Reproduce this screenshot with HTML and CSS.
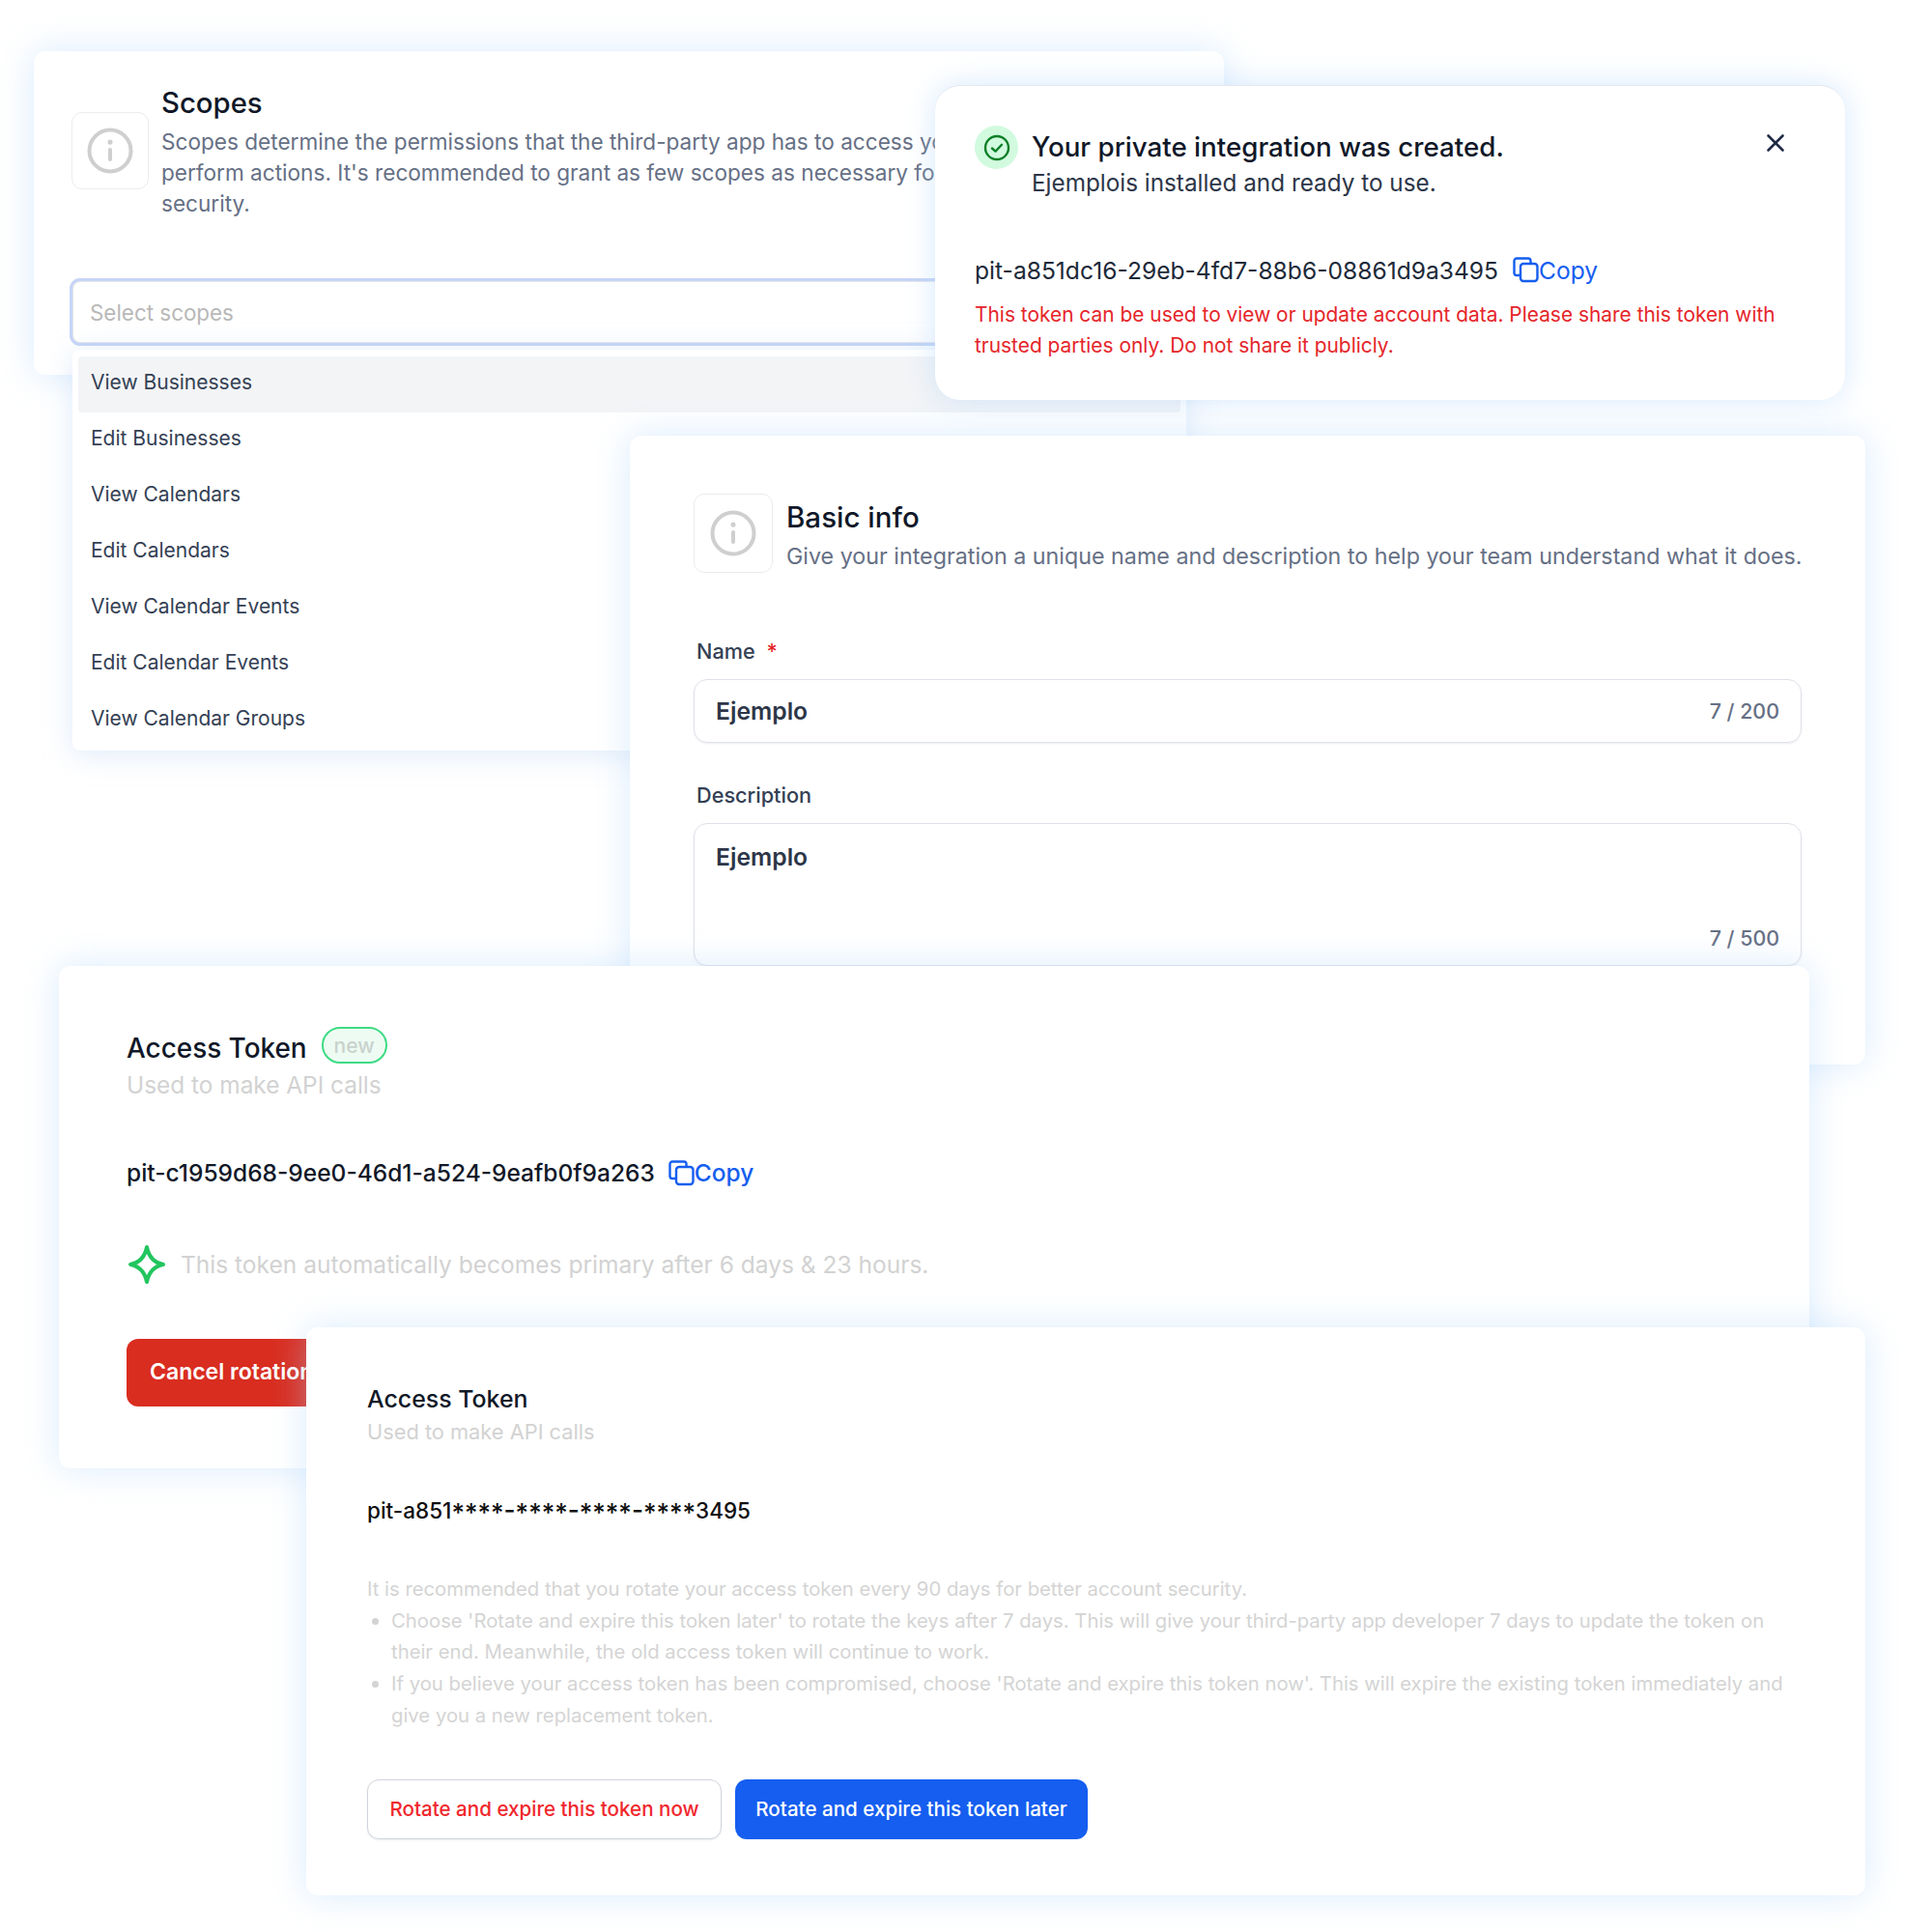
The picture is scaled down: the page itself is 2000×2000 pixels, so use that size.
FILE: index.html
```html
<!DOCTYPE html>
<html lang="en">
<head>
    <meta name="viewport" content="width=device-width, initial-scale=1">
    <title>Private integrations</title>
    <link rel="stylesheet" href="styles.css">
</head>
<body>

<div class="canvas">

    <!-- scopes -->
    <section class="card card-scopes">
        <div class="head">
            <div class="icon-box icon-box-scopes">
                <svg width="50" height="50" viewBox="0 0 50 50" fill="none" stroke="#cfcfcf" stroke-linecap="round">
                    <circle cx="25" cy="25" r="21.5" stroke-width="4"/>
                    <path d="M25 24v10" stroke-width="4"/>
                    <path d="M25 16v.2" stroke-width="5"/>
                </svg>
            </div>
            <div class="head-text">
                <h2 class="title-scopes">Scopes</h2>
                <p class="desc desc-scopes">Scopes determine the permissions that the third-party app has to access your<br>perform actions. It's recommended to grant as few scopes as necessary for<br>security.</p>
            </div>
        </div>
        <div class="select-box">Select scopes</div>
    </section>

    <ul class="dropdown">
        <li class="active">View Businesses</li>
        <li>Edit Businesses</li>
        <li>View Calendars</li>
        <li>Edit Calendars</li>
        <li>View Calendar Events</li>
        <li>Edit Calendar Events</li>
        <li>View Calendar Groups</li>
    </ul>

    <!-- basic info -->
    <section class="card card-basic">
        <div class="head head-basic">
            <div class="icon-box icon-box-basic">
                <svg width="50" height="50" viewBox="0 0 50 50" fill="none" stroke="#cfcfcf" stroke-linecap="round">
                    <circle cx="25" cy="25" r="21.5" stroke-width="4"/>
                    <path d="M25 24v10" stroke-width="4"/>
                    <path d="M25 16v.2" stroke-width="5"/>
                </svg>
            </div>
            <div class="head-text head-text-basic">
                <h2 class="title-basic">Basic info</h2>
                <p class="desc desc-basic">Give your integration a unique name and description to help your team understand what it does.</p>
            </div>
        </div>

        <label class="field-label">Name <span class="required">*</span></label>
        <div class="field field-name">
            <span class="field-value">Ejemplo</span>
            <span class="field-count">7 / 200</span>
        </div>

        <label class="field-label field-label-desc">Description</label>
        <div class="field field-desc">
            <span class="field-value">Ejemplo</span>
            <span class="field-count">7 / 500</span>
        </div>
    </section>

    <!-- created dialog -->
    <section class="card card-success">
        <div class="success-head">
            <div class="check-circle">
                <svg width="28" height="28" viewBox="0 0 28 28" fill="none" stroke="#0b7f26" stroke-linecap="round" stroke-linejoin="round">
                    <circle cx="14" cy="14" r="12" stroke-width="2.4"/>
                    <path d="M9 14.5l3.5 3.2L19 10.8" stroke-width="2.4"/>
                </svg>
            </div>
            <div class="success-text">
                <h3>Your private integration was created.</h3>
                <p>Ejemplois installed and ready to use.</p>
            </div>
            <svg class="close-icon" width="20" height="20" viewBox="0 0 20 20" fill="none" stroke="#1f2a44" stroke-width="2.6" stroke-linecap="round">
                <path d="M2.5 2.5l15 15M17.5 2.5l-15 15"/>
            </svg>
        </div>
        <div class="token token-success">
            <span>pit-a851dc16-29eb-4fd7-88b6-08861d9a3495</span>
            <a class="copy">
                <svg width="27" height="27" viewBox="0 0 27 27" fill="none" stroke="#155eef" stroke-width="2.4" stroke-linejoin="round">
                    <path d="M8 19H4a2.500 2.500 0 0 1-2.500-2.500V4A2.500 2.500 0 0 1 4 1.500h12A2.500 2.500 0 0 1 18.500 4v3"/>
                    <rect x="8" y="7" width="17.500" height="18" rx="3"/>
                </svg>Copy</a>
        </div>
        <p class="warning">This token can be used to view or update account data. Please share this token with trusted parties only. Do not share it publicly.</p>
    </section>

    <!-- rotating token -->
    <section class="card card-rotation">
        <div class="rotation-title">
            <h2>Access Token</h2>
            <span class="badge">new</span>
        </div>
        <p class="muted muted-large muted-sub">Used to make API calls</p>
        <div class="token token-rotation">
            <span>pit-c1959d68-9ee0-46d1-a524-9eafb0f9a263</span>
            <a class="copy">
                <svg width="27" height="27" viewBox="0 0 27 27" fill="none" stroke="#155eef" stroke-width="2.4" stroke-linejoin="round">
                    <path d="M8 19H4a2.500 2.500 0 0 1-2.500-2.500V4A2.500 2.500 0 0 1 4 1.500h12A2.500 2.500 0 0 1 18.500 4v3"/>
                    <rect x="8" y="7" width="17.500" height="18" rx="3"/>
                </svg>Copy</a>
        </div>
        <div class="notice">
            <svg width="42" height="42" viewBox="0 0 42 42" fill="none" stroke="#22c55e" stroke-width="4" stroke-linejoin="round">
                <path d="M21 3c2 10 7 16 17 18-10 2-15 8-17 18-2-10-7-16-17-18 10-2 15-8 17-18z"/>
            </svg>
            <span class="muted notice-text">This token automatically becomes primary after 6 days &amp; 23 hours.</span>
        </div>
        <button class="btn btn-cancel">Cancel rotation</button>
    </section>

    <!-- masked token -->
    <section class="card card-token">
        <h2 class="title-token">Access Token</h2>
        <p class="muted muted-small">Used to make API calls</p>
        <div class="token-masked">pit-a851<span class="mask"><span class="stars">****</span>-<span class="stars">****</span>-<span class="stars">****</span>-<span class="stars">****</span></span>3495</div>
        <div class="advice">
            <p>It is recommended that you rotate your access token every 90 days for better account security.</p>
            <ul>
                <li>Choose 'Rotate and expire this token later' to rotate the keys after 7 days. This will give your third-party app developer 7 days to update the token on their end. Meanwhile, the old access token will continue to work.</li>
                <li>If you believe your access token has been compromised, choose 'Rotate and expire this token now'. This will expire the existing token immediately and give you a new replacement token.</li>
            </ul>
        </div>
        <div class="actions">
            <button class="btn btn-now">Rotate and expire this token now</button>
            <button class="btn btn-later">Rotate and expire this token later</button>
        </div>
    </section>

</div>

</body>
</html>
```

FILE: styles.css
```css
* {
    box-sizing: border-box;
}

body {
    margin: 0;
    background-color: #fff;
    font-family: Inter, "Noto Sans", sans-serif;
    color: #101828;
}

h2, h3, p, ul {
    margin: 0;
    padding: 0;
}

.canvas {
    position: relative;
    width: 2000px;
    height: 2000px;
    overflow: hidden;
}

.card {
    position: absolute;
    background-color: #fff;
    border-radius: 12px;
    box-shadow: 0 0 36px rgba(170, 210, 250, .45);
}

.card-scopes {
    left: 35px;
    top: 53px;
    width: 1232px;
    height: 335px;
    padding: 36px 37px 0 39px;
}

.head {
    display: flex;
    gap: 13px;
}

.icon-box {
    flex: none;
    display: flex;
    align-items: center;
    justify-content: center;
    border: 1.500px solid #eaecf0;
    border-radius: 11px;
}

.icon-box-scopes {
    width: 80px;
    height: 80px;
    margin-top: 27px;
}

.icon-box-basic {
    width: 82px;
    height: 82px;
}

.title-scopes, .title-basic {
    font-size: 29.500px;
    font-weight: 500;
    line-height: 36px;
    color: #101828;
}

.title-scopes {
    font-size: 29.300px;
}

.desc {
    color: #667085;
    font-size: 22.600px;
    line-height: 32px;
    white-space: nowrap;
}

.desc-scopes {
    margin-top: 6px;
}

.head-text-basic {
    padding-top: 5px;
}

.desc-basic {
    margin-top: 7.500px;
    font-size: 23.270px;
}

.select-box {
    margin-top: 61px;
    height: 70px;
    margin-left: -2px;
    padding: 0 21px;
    display: flex;
    align-items: center;
    border-radius: 11px;
    box-shadow: inset 0 0 0 3px #c6d5f8, inset 0 0 0 4px #e6e6e8;
    color: #b8b8b8;
    font-size: 22.400px;
}

.dropdown {
    position: absolute;
    left: 75px;
    top: 362px;
    width: 1153px;
    height: 415px;
    padding: 7px 6px;
    list-style-type: none;
    overflow: hidden;
    background-color: #fff;
    border-radius: 8px;
    box-shadow: 0 4px 30px rgba(170, 200, 240, .36);
}

.dropdown li {
    height: 58px;
    padding: 0 0 6px 13px;
    display: flex;
    align-items: center;
    font-size: 21px;
    color: #344054;
    border-radius: 4px;
}

.dropdown li.active {
    background-color: #f3f4f6;
}

.card-basic {
    left: 652px;
    top: 451px;
    width: 1279px;
    height: 651px;
    padding: 60px 66px 0;
}

.head-basic {
    align-items: center;
    gap: 14px;
}

.field-label {
    display: block;
    margin: 63.500px 0 0 3px;
    font-size: 21.700px;
    line-height: 34px;
    font-weight: 500;
    color: #344054;
}

.required {
    margin-left: 6px;
    color: #e5252a;
}

.field-label-desc {
    margin-top: 36.500px;
}

.field {
    margin-top: 12.500px;
    display: flex;
    justify-content: space-between;
    align-items: center;
    padding: 0 22px;
    border: 1.500px solid #dfe1e8;
    border-radius: 14px;
    box-shadow: 0 1px 2px rgba(16, 24, 40, .08);
}

.field-name {
    height: 66px;
}

.field-desc {
    position: relative;
    height: 148px;
    align-items: flex-start;
    padding-top: 17px;
}

.field-desc .field-count {
    position: absolute;
    right: 22px;
    bottom: 13px;
}

.field-value {
    font-size: 24.700px;
    line-height: 34px;
    font-weight: 600;
    color: #2d3648;
}

.field-count {
    font-size: 21.400px;
    line-height: 30px;
    font-weight: 500;
    color: #667085;
}

.card-success {
    left: 968px;
    top: 88px;
    width: 942px;
    height: 326px;
    padding: 41px 41px 0;
    border-radius: 26px;
    border-top: 1px solid #e4e7ec;
    box-shadow: 0 0 30px rgba(170, 210, 250, .48);
}

.success-head {
    display: flex;
    position: relative;
}

.check-circle {
    flex: none;
    width: 45px;
    height: 45px;
    margin-right: 14px;
    display: flex;
    align-items: center;
    justify-content: center;
    border-radius: 50%;
    background-color: #d1fadf;
}

.success-text h3 {
    font-size: 27.750px;
    line-height: 44px;
    font-weight: 500;
    color: #101828;
}

.success-text p {
    margin-top: -1.500px;
    font-size: 24.300px;
    line-height: 32px;
    color: #2d3648;
}

.close-icon {
    position: absolute;
    right: 21px;
    top: 8px;
}

.token {
    display: flex;
    align-items: center;
    gap: 15px;
}

.token-success {
    margin-top: 58px;
    font-size: 24.600px;
    line-height: 34px;
    color: #1d2939;
}

.copy {
    display: flex;
    align-items: center;
    color: #155eef;
}

.warning {
    margin-top: 13px;
    font-size: 20.900px;
    line-height: 32px;
    color: #e5252a;
}

.card-rotation {
    left: 61px;
    top: 1000px;
    width: 1812px;
    height: 520px;
    padding: 62px 70px 0;
}

.rotation-title {
    display: flex;
    align-items: flex-start;
    gap: 15px;
}

.rotation-title h2 {
    margin-top: 4px;
    font-size: 27.900px;
    line-height: 39px;
    font-weight: 500;
    color: #101828;
}

.badge {
    height: 38px;
    width: 68px;
    margin-top: 1px;
    display: flex;
    align-items: center;
    justify-content: center;
    border: 2px solid #3ddc84;
    border-radius: 19px;
    background-color: #eefbf3;
    color: #c9d2cc;
    font-size: 21px;
    font-weight: 500;
}

.muted {
    color: #d2d2d2;
}

.muted-large {
    font-size: 24.400px;
    line-height: 34px;
}

.notice-text {
    font-size: 24.520px;
    line-height: 34px;
}

.muted-sub {
    margin-top: 1px;
}

.token-rotation {
    margin-top: 56px;
    gap: 14px;
    font-size: 24.500px;
    font-weight: 500;
    line-height: 36px;
    color: #101828;
}

.notice {
    margin-top: 56px;
    display: flex;
    align-items: center;
    gap: 14px;
}

.btn {
    font-family: inherit;
    border-radius: 12px;
    cursor: pointer;
}

.btn-cancel {
    margin-top: 56px;
    width: 280px;
    height: 70px;
    padding: 0 0 3px 24px;
    text-align: left;
    border: none;
    background-color: #d92d20;
    color: #fff;
    font-size: 23px;
    font-weight: 600;
}

.card-token {
    left: 317px;
    top: 1374px;
    width: 1614px;
    height: 588px;
    padding: 57px 63px 0;
}

.title-token {
    font-size: 24.900px;
    line-height: 35px;
    font-weight: 500;
    color: #101828;
}

.muted-small {
    margin-top: 0;
    font-size: 21.800px;
    line-height: 32px;
}

.token-masked {
    margin-top: 49px;
    font-size: 22.500px;
    line-height: 34px;
    font-weight: 500;
    color: #101010;
}

.mask {
    font-size: 26px;
    line-height: 20px;
}

.stars {
    vertical-align: -3px;
}

.advice {
    margin-top: 48px;
    font-size: 20.300px;
    line-height: 32.700px;
    color: #d4d4d4;
}

.advice ul {
    padding-left: 25px;
}

.actions {
    margin-top: 49px;
    display: flex;
    gap: 14px;
}

.btn-now, .btn-later {
    height: 62px;
    font-size: 20.600px;
    font-weight: 500;
}

.btn-now {
    width: 367px;
    border: 1.500px solid #d0d5dd;
    background-color: #fff;
    color: #f0272d;
    box-shadow: 0 1px 2px rgba(16, 24, 40, .08);
}

.btn-later {
    width: 365px;
    border: none;
    background-color: #155eef;
    color: #fff;
}
```
